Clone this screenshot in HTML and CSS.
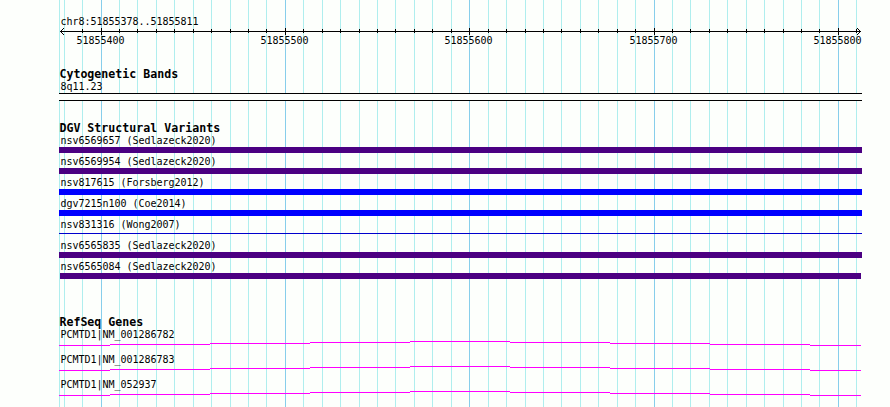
FILE: index.html
```
<!DOCTYPE html>
<html lang="en">
<head>
    <meta charset="UTF-8">
    <title>chr8:51855378..51855811</title>
    <link rel="stylesheet" href="styles.css">
</head>
<body>
<div class="browser">
    <!-- grid lines behind all tracks -->
    <svg class="grid" width="803" height="407">
        <path class="minor" d="M0.5 0V407M5.5 0V407M23.5 0V407M60.5 0V407M78.5 0V407M97.5 0V407M115.5 0V407M134.5 0V407M152.5 0V407M171.5 0V407M189.5 0V407M207.5 0V407M244.5 0V407M263.5 0V407M281.5 0V407M300.5 0V407M318.5 0V407M336.5 0V407M355.5 0V407M373.5 0V407M392.5 0V407M429.5 0V407M447.5 0V407M466.5 0V407M484.5 0V407M502.5 0V407M521.5 0V407M539.5 0V407M558.5 0V407M576.5 0V407M613.5 0V407M631.5 0V407M650.5 0V407M668.5 0V407M687.5 0V407M705.5 0V407M724.5 0V407M742.5 0V407M760.5 0V407M797.5 0V407"/>
        <path class="major" d="M42.5 0V407M226.5 0V407M410.5 0V407M595.5 0V407M779.5 0V407"/>
    </svg>

    <div class="ruler">
        <div class="label">chr8:51855378..51855811</div>
        <svg class="scale" width="803" height="20">
            <path d="M1 3.5H802M23.5 1V5M60.5 1V5M78.5 1V5M97.5 1V5M115.5 1V5M134.5 1V5M152.5 1V5M171.5 1V5M189.5 1V5M207.5 1V5M244.5 1V5M263.5 1V5M281.5 1V5M300.5 1V5M318.5 1V5M336.5 1V5M355.5 1V5M373.5 1V5M392.5 1V5M429.5 1V5M447.5 1V5M466.5 1V5M484.5 1V5M502.5 1V5M521.5 1V5M539.5 1V5M558.5 1V5M576.5 1V5M613.5 1V5M631.5 1V5M650.5 1V5M668.5 1V5M687.5 1V5M705.5 1V5M724.5 1V5M742.5 1V5M760.5 1V5M797.5 1V5"/>
            <path d="M42.5 0V7M226.5 0V7M410.5 0V7M595.5 0V7M779.5 0V7"/>
            <path d="M2 2.5H3M3 1.5H4M4 0.5H5M2 4.5H3M3 5.5H4M4 6.5H5M800 2.5H801M799 1.5H800M798 0.5H799M800 4.5H801M799 5.5H800M798 6.5H799"/>
            <text x="17.5" y="16">51855400</text>
            <text x="201.5" y="16">51855500</text>
            <text x="385.5" y="16">51855600</text>
            <text x="570.5" y="16">51855700</text>
            <text x="754.5" y="16">51855800</text>
        </svg>
    </div>

    <div class="track bands">
        <div class="title">Cytogenetic Bands</div>
        <div class="label">8q11.23</div>
        <div class="band"></div>
    </div>

    <div class="track variants">
        <div class="title">DGV Structural Variants</div>
        <div class="variant">
            <div class="label">nsv6569657 (Sedlazeck2020)</div>
            <div class="bar complex"></div>
        </div>
        <div class="variant">
            <div class="label">nsv6569954 (Sedlazeck2020)</div>
            <div class="bar complex"></div>
        </div>
        <div class="variant">
            <div class="label">nsv817615 (Forsberg2012)</div>
            <div class="bar gain"></div>
        </div>
        <div class="variant">
            <div class="label">dgv7215n100 (Coe2014)</div>
            <div class="bar gain"></div>
        </div>
        <div class="variant">
            <div class="label">nsv831316 (Wong2007)</div>
            <div class="bar thin"></div>
        </div>
        <div class="variant">
            <div class="label">nsv6565835 (Sedlazeck2020)</div>
            <div class="bar complex"></div>
        </div>
        <div class="variant">
            <div class="label">nsv6565084 (Sedlazeck2020)</div>
            <div class="bar complex inner"></div>
        </div>
    </div>

    <div class="track genes">
        <div class="title">RefSeq Genes</div>
        <div class="gene">
            <div class="label">PCMTD1|NM_001286782</div>
            <svg class="intron" width="803" height="5"><path d="M0 4.5H51M51 3.5H151M151 2.5H251M251 1.5H351M351 0.5H451M451 1.5H551M551 2.5H651M651 3.5H751M751 4.5H802"/></svg>
        </div>
        <div class="gene">
            <div class="label">PCMTD1|NM_001286783</div>
            <svg class="intron" width="803" height="5"><path d="M0 4.5H51M51 3.5H151M151 2.5H251M251 1.5H351M351 0.5H451M451 1.5H551M551 2.5H651M651 3.5H751M751 4.5H802"/></svg>
        </div>
        <div class="gene">
            <div class="label">PCMTD1|NM_052937</div>
            <svg class="intron" width="803" height="5"><path d="M0 4.5H51M51 3.5H151M151 2.5H251M251 1.5H351M351 0.5H451M451 1.5H551M551 2.5H651M651 3.5H751M751 4.5H802"/></svg>
        </div>
    </div>
</div>
</body>
</html>
```
FILE: styles.css
```
body {
    margin: 0;
    background-color: #fdfffc;
    color: #000;
    font-family: "DejaVu Sans Mono", monospace;
    font-size: 10px;
    overflow: hidden;
}

.browser {
    position: relative;
    box-sizing: border-box;
    width: 803px;
    height: 407px;
    margin-left: 59px;
    padding-top: 15px;
}

svg {
    display: block;
    fill: none;
    shape-rendering: crispEdges;
}

/* lies under the tracks */
.grid {
    position: absolute;
    top: 0;
    left: 0;
    z-index: -1;
}

.minor {
    stroke: #afeeee;
}

.major {
    stroke: #87ceeb;
}

.label {
    height: 13px;
    line-height: 13px;
    padding-left: 1.5px;
    letter-spacing: -0.02px;
    white-space: pre;
}

.title {
    height: 12px;
    line-height: 12px;
    padding-left: 0.4px;
    font-size: 11.6px;
    font-weight: bold;
    letter-spacing: 0.015px;
    white-space: pre;
}

.scale path {
    stroke: #000;
}

.scale text {
    fill: #000;
    letter-spacing: -0.02px;
}

.bands {
    margin-top: 20px;
}

.band {
    height: 6px;
    background-color: #fdfffc;
    border-top: 1px solid #000;
    border-bottom: 1px solid #000;
}

.variants {
    margin-top: 21px;
}

.variant {
    height: 21px;
}

.bar {
    height: 6px;
}

.complex {
    background-color: #4b0082;
}

.gain {
    background-color: #0000ff;
}

.thin {
    height: 1px;
    margin-top: 2px;
    background-color: #0000cd;
}

.inner {
    margin: 0 1px;
}

.genes {
    margin-top: 35px;
}

.gene {
    height: 25px;
}

.intron path {
    stroke: #ff00ff;
}
```
